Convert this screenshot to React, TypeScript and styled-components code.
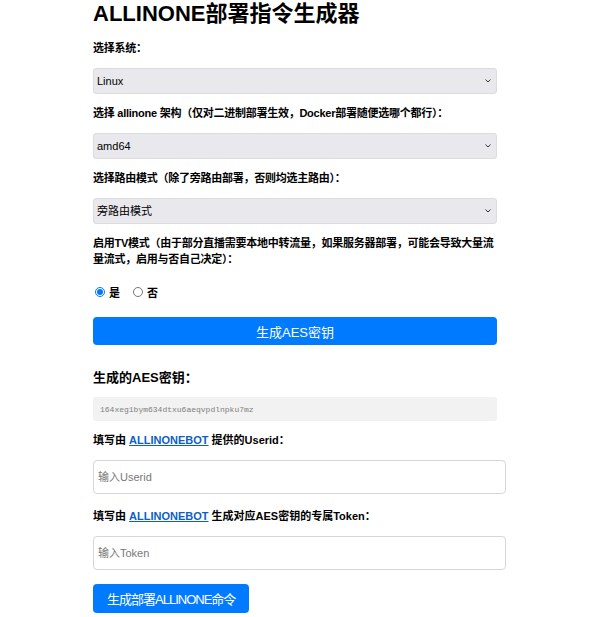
import React, { useState } from 'react';
import styled, { createGlobalStyle } from 'styled-components';

const GlobalStyle = createGlobalStyle`
  body {
    margin: 0;
    background: #fff;
    font-family: "Liberation Sans", "Noto Sans CJK SC", sans-serif;
    color: #000;
  }
`;

const Page = styled.div`
  width: 406px;
  margin: 0 auto;
  padding: 1px 0 0 0;
  box-sizing: border-box;
`;

const Title = styled.h1`
  font-size: 22px;
  font-weight: bold;
  margin: 0 0 13px 0;
  line-height: 26px;
`;

const Label = styled.div`
  font-size: 11px;
  font-weight: bold;
  line-height: 16px;
  letter-spacing: -0.25px;
  margin: 0 0 12px 0;
`;

const SelectWrap = styled.div`
  position: relative;
  width: 404px;
  margin-bottom: 11px;
`;

const Select = styled.select`
  display: block;
  appearance: none;
  width: 100%;
  height: 26px;
  padding: 0 3px;
  font-size: 11px;
  font-family: "Liberation Sans", "Noto Sans CJK SC", sans-serif;
  background-color: #e9e9ed;
  border: 1px solid #dcdcdc;
  border-radius: 3px;
  color: #000;
`;

const Chevron = styled.svg`
  position: absolute;
  right: 6px;
  top: 11px;
  width: 6px;
  height: 4px;
  pointer-events: none;
`;

const RadioRow = styled.div`
  display: flex;
  align-items: center;
  gap: 4px;
  font-size: 11px;
  font-weight: bold;
  margin: 17px 0 17px 2px;
`;

const Radio = styled.input`
  width: 10px;
  height: 10px;
  margin: 0;
  accent-color: #0075ff;
`;

const RadioText = styled.span`
  margin-right: 9px;
`;

const Button = styled.button<{ $full?: boolean }>`
  display: block;
  width: ${p => (p.$full ? '404px' : 'auto')};
  height: ${p => (p.$full ? '28px' : '29px')};
  padding: 0 14px;
  background: #007bff;
  color: #fff;
  border: none;
  border-radius: 4px;
  font-size: 13px;
  letter-spacing: ${p => (p.$full ? '0' : '-1px')};
  font-family: "Liberation Sans", "Noto Sans CJK SC", sans-serif;
`;

const SubTitle = styled.h3`
  font-size: 13px;
  font-weight: bold;
  margin: 25px 0 11px 0;
  line-height: 16px;
`;

const KeyBox = styled.div`
  width: 404px;
  box-sizing: border-box;
  background: #f2f2f2;
  border-radius: 3px;
  height: 24px;
  display: flex;
  align-items: center;
  padding: 0 7px;
  font-family: "Liberation Mono", "DejaVu Sans Mono", monospace;
  font-size: 8px;
  color: #808080;
  margin-bottom: 11px;
`;

const Link = styled.a`
  color: #0b5fc6;
  text-decoration: underline;
`;

const Input = styled.input`
  display: block;
  box-sizing: border-box;
  width: 413px;
  height: 34px;
  padding: 0 4px;
  font-size: 11px;
  font-family: "Liberation Sans", "Noto Sans CJK SC", sans-serif;
  border: 1px solid #d6d6d6;
  border-radius: 4px;
  margin: 0 0 14px 0;
  &::placeholder {
    color: #777;
  }
`;

const InputLabel = styled(Label)`
  letter-spacing: 0;
  margin-bottom: 12px;
`;

function Dropdown({ value, options }: { value: string; options: string[] }) {
  return (
    <SelectWrap>
      <Select defaultValue={value}>
        {options.map(o => (
          <option key={o} value={o}>{o}</option>
        ))}
      </Select>
      <Chevron viewBox="0 0 6 4">
        <path d="M0.5 0.5 L3 3 L5.5 0.5" fill="none" stroke="#333" strokeWidth="1" />
      </Chevron>
    </SelectWrap>
  );
}

export default function App() {
  const [tv, setTv] = useState('yes');
  return (
    <>
      <GlobalStyle />
      <Page>
        <Title>ALLINONE部署指令生成器</Title>
        <Label>选择系统：</Label>
        <Dropdown value="Linux" options={['Linux', 'Windows']} />
        <Label>选择 allinone 架构（仅对二进制部署生效，Docker部署随便选哪个都行）：</Label>
        <Dropdown value="amd64" options={['amd64', 'arm64']} />
        <Label>选择路由模式（除了旁路由部署，否则均选主路由）：</Label>
        <Dropdown value="旁路由模式" options={['旁路由模式', '主路由模式']} />
        <Label>启用TV模式（由于部分直播需要本地中转流量，如果服务器部署，可能会导致大量流量流式，启用与否自己决定）：</Label>
        <RadioRow>
          <Radio type="radio" name="tv" checked={tv === 'yes'} onChange={() => setTv('yes')} />
          <RadioText>是</RadioText>
          <Radio type="radio" name="tv" checked={tv === 'no'} onChange={() => setTv('no')} />
          <RadioText>否</RadioText>
        </RadioRow>
        <Button $full>生成AES密钥</Button>
        <SubTitle>生成的AES密钥：</SubTitle>
        <KeyBox>164xeg1bym634dtxu6aeqvpdlnpku7mz</KeyBox>
        <InputLabel>填写由 <Link href="#">ALLINONEBOT</Link> 提供的Userid：</InputLabel>
        <Input placeholder="输入Userid" />
        <InputLabel>填写由 <Link href="#">ALLINONEBOT</Link> 生成对应AES密钥的专属Token：</InputLabel>
        <Input placeholder="输入Token" />
        <Button>生成部署ALLINONE命令</Button>
      </Page>
    </>
  );
}
